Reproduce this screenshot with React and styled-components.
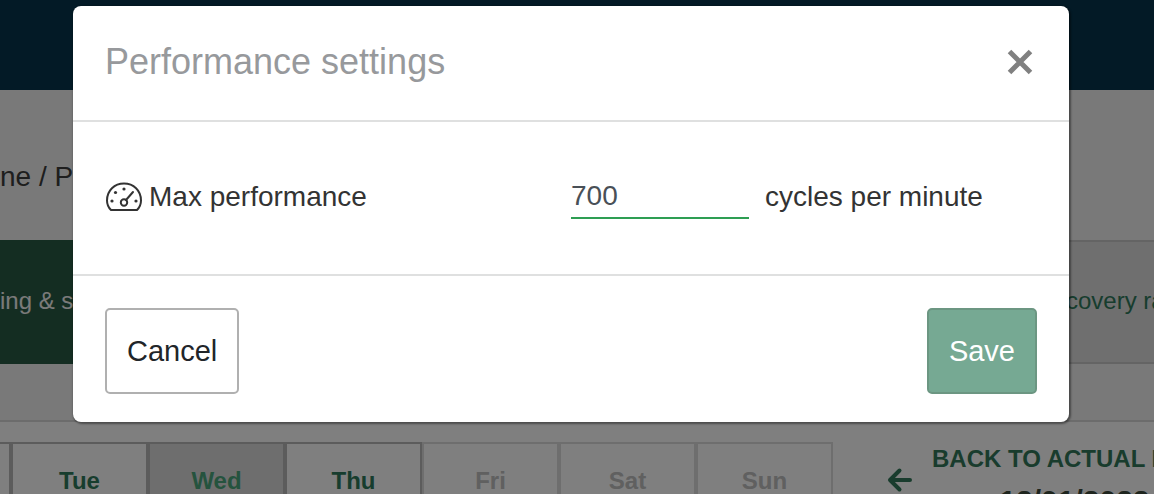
import { useState } from "react"
import styled, { createGlobalStyle } from "styled-components"

const GlobalStyle = createGlobalStyle`
    * {
        box-sizing: border-box;
    }
    body {
        margin: 0;
        overflow: hidden;
        background: #ffffff;
        font-family: "Liberation Sans", Arial, sans-serif;
    }
    button, input {
        font-family: inherit;
    }
`

const Page = styled.div`
    position: relative;
    height: 100vh;
    overflow: hidden;
    white-space: nowrap;
`
const TopBar = styled.header`
    height: 90px;
    background: #06344c;
`
const Content = styled.div`
    background: #f2f2f2;
    border-bottom: 2px solid #d8d8d8;
    padding-bottom: 56px;
`
const Breadcrumb = styled.nav`
    height: 150px;
    padding: 71px 0 0;
    font-size: 28px;
    line-height: 32px;
    color: #3c3c3c;
`
const TabBar = styled.div`
    display: flex;
    justify-content: space-between;
    height: 124px;
    background: #dedede;
    border: solid #c8c8c8;
    border-width: 2px 0;
`
const Tab = styled.button`
    margin: -2px 0;
    padding: 0 0 2px;
    border: 0;
    font-size: 24px;
    line-height: 28px;
    text-align: left;
    color: ${(props) => props.$active ? "#f4f4f4" : "#2f7a5c"};
    background: ${(props) => props.$active ? "#285a44" : "transparent"};
    width: ${(props) => props.$active ? "120px" : "88px"};
    overflow: hidden;
`
const Schedule = styled.div`
    display: flex;
    padding-top: 20px;
`
const Days = styled.div`
    display: flex;
    margin-left: -126px;
`
const Day = styled.button`
    flex: none;
    width: 137px;
    height: 78px;
    padding: 0;
    border: 2px solid ${(props) => props.$disabled ? "#dcdcdc" : "#b8b8b8"};
    background: ${(props) => props.$selected ? "#dcdcdc" : "transparent"};
    color: ${(props) => props.$disabled ? "#c0c0c0" : props.$selected ? "#4aa67c" : "#2f7a5c"};
    font-size: 24px;
    font-weight: bold;
    line-height: 28px;
`
const BackLink = styled.a`
    display: flex;
    align-items: center;
    gap: 19px;
    height: 76px;
    margin-left: 54px;
    color: #32795a;
    font-size: 24px;
    font-weight: bold;
    line-height: 42px;
    text-align: center;
    text-decoration: none;
`
const BackDate = styled.div`
    color: #3c4a3c;
    font-size: 30px;
`

const Overlay = styled.div`
    position: absolute;
    inset: 0;
    padding: 6px 85px 0 73px;
    background: rgba(0, 0, 0, 0.5);
`
const Modal = styled.form`
    color: #333333;
    background: #ffffff;
    border-radius: 8px;
    box-shadow: 1px 1px 2px 1px rgba(0, 0, 0, 0.4);
`
const ModalHeader = styled.div`
    display: flex;
    align-items: center;
    justify-content: space-between;
    height: 116px;
    padding: 0 32px 2px;
    border-bottom: 2px solid #dfe0e0;
`
const Title = styled.h2`
    margin: 0;
    color: #97999c;
    font-size: 36px;
    font-weight: normal;
    line-height: 40px;
`
const CloseButton = styled.button`
    display: flex;
    padding: 4px;
    border: 0;
    background: none;
    color: #808080;
`
const ModalBody = styled.div`
    display: flex;
    align-items: center;
    height: 154px;
    padding: 0 32px 3px;
    border-bottom: 2px solid #dfe0e0;
    font-size: 28px;
    line-height: 32px;
`
const Label = styled.label`
    display: flex;
    align-items: center;
    gap: 6px;
    width: 50%;
`
const NumberInput = styled.input`
    width: 178px;
    height: 44px;
    padding: 0;
    border: 0;
    border-bottom: 2px solid #2e9e53;
    outline: 0;
    background: none;
    color: #495057;
    font-size: 28px;
`
const Unit = styled.span`
    margin-left: 16px;
`
const ModalFooter = styled.div`
    display: flex;
    justify-content: space-between;
    padding: 32px 32px 28px;
`
const Button = styled.button`
    height: 86px;
    padding: 0 20px;
    border: 2px solid ${(props) => props.$primary ? "#6c9682" : "#b0b0b0"};
    border-radius: 5px;
    background: ${(props) => props.$primary ? "#76a993" : "#ffffff"};
    color: ${(props) => props.$primary ? "#ffffff" : "#212529"};
    font-size: 29px;
    line-height: 32px;
`

const days = [
    { name: "" },
    { name: "Tue" },
    { name: "Wed", selected: true },
    { name: "Thu" },
    { name: "Fri", disabled: true },
    { name: "Sat", disabled: true },
    { name: "Sun", disabled: true },
]

function GaugeIcon() {
    return (
        <svg width="38" height="30" viewBox="0 0 38 30" fill="none" stroke="currentColor" strokeWidth="2" aria-hidden="true">
            <path d="M6 28H32C34.6 25.5 36 22 36 18.5C36 8.5 28.5 1.5 19 1.5S2 8.5 2 18.5C2 22 3.4 25.5 6 28Z" strokeLinejoin="round" />
            <circle cx="19" cy="20.5" r="3.2" />
            <path d="M21 18L28 10" strokeLinecap="round" />
            <g fill="currentColor" stroke="none">
                <circle cx="7" cy="19" r="1.6" />
                <circle cx="10.5" cy="10.5" r="1.6" />
                <circle cx="19" cy="7" r="1.6" />
                <circle cx="31" cy="19" r="1.6" />
            </g>
        </svg>
    )
}

function App() {
    const [performance, setPerformance] = useState("700")

    return (
        <>
            <GlobalStyle />
            <Page>
                <TopBar />
                <Content>
                    <Breadcrumb>ne / P</Breadcrumb>
                    <TabBar>
                        <Tab $active>ing &amp; s</Tab>
                        <Tab>covery ra</Tab>
                    </TabBar>
                </Content>
                <Schedule>
                    <Days>
                        {days.map((day) => (
                            <Day key={day.name} $selected={day.selected} $disabled={day.disabled}>{day.name}</Day>
                        ))}
                    </Days>
                    <BackLink href="#">
                        <svg width="26" height="26" viewBox="0 0 26 26" fill="none" stroke="currentColor" strokeWidth="4" strokeLinecap="round" strokeLinejoin="round" aria-hidden="true">
                            <path d="M12.5 3.5L3 13L12.5 22.5M3 13H23" />
                        </svg>
                        <div>
                            BACK TO ACTUAL PLAN
                            <BackDate>12/01/2022</BackDate>
                        </div>
                    </BackLink>
                </Schedule>

                <Overlay>
                    <Modal role="dialog" aria-labelledby="modal-title" onSubmit={(e) => e.preventDefault()}>
                        <ModalHeader>
                            <Title id="modal-title">Performance settings</Title>
                            <CloseButton type="button" aria-label="Close">
                                <svg width="26" height="26" viewBox="0 0 26 26" stroke="currentColor" strokeWidth="5">
                                    <path d="M2.5 2.5L23.5 23.5M23.5 2.5L2.5 23.5" />
                                </svg>
                            </CloseButton>
                        </ModalHeader>
                        <ModalBody>
                            <Label htmlFor="max-performance">
                                <GaugeIcon />
                                Max performance
                            </Label>
                            <NumberInput
                                id="max-performance"
                                value={performance}
                                onChange={(e) => setPerformance(e.target.value)}
                            />
                            <Unit>cycles per minute</Unit>
                        </ModalBody>
                        <ModalFooter>
                            <Button type="button">Cancel</Button>
                            <Button type="submit" $primary>Save</Button>
                        </ModalFooter>
                    </Modal>
                </Overlay>
            </Page>
        </>
    )
}

export default App
